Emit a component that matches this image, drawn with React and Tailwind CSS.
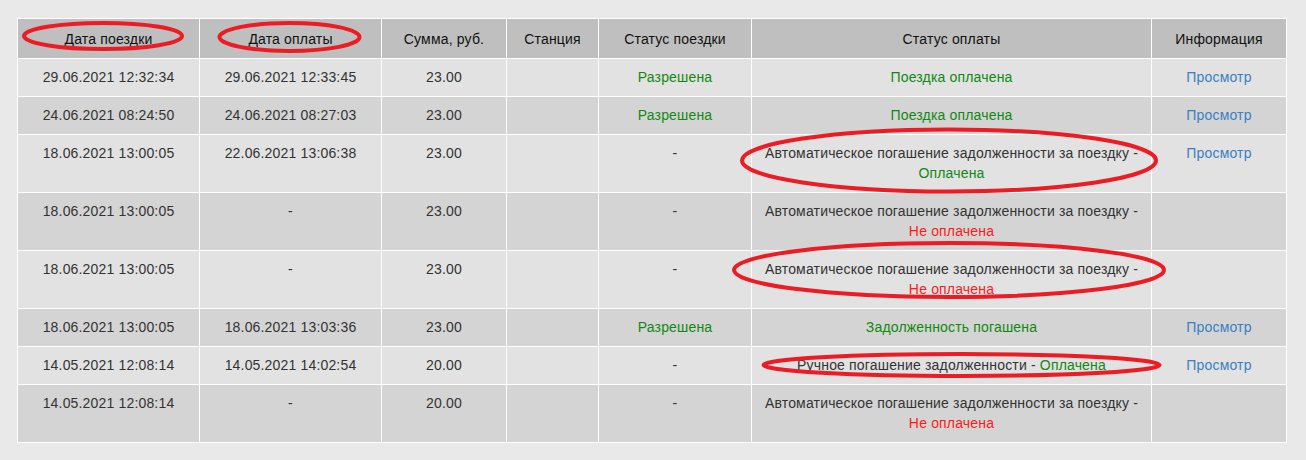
import React from "react";

const rows = [
  { trip: "29.06.2021 12:32:34", paid: "29.06.2021 12:33:45", sum: "23.00", tripStatus: "Разрешена", pay: [{ t: "Поездка оплачена", c: "g" }], info: true },
  { trip: "24.06.2021 08:24:50", paid: "24.06.2021 08:27:03", sum: "23.00", tripStatus: "Разрешена", pay: [{ t: "Поездка оплачена", c: "g" }], info: true },
  { trip: "18.06.2021 13:00:05", paid: "22.06.2021 13:06:38", sum: "23.00", tripStatus: "-", pay: [{ t: "Автоматическое погашение задолженности за поездку - " }, { t: "Оплачена", c: "g" }], info: true },
  { trip: "18.06.2021 13:00:05", paid: "-", sum: "23.00", tripStatus: "-", pay: [{ t: "Автоматическое погашение задолженности за поездку - " }, { t: "Не оплачена", c: "r" }] },
  { trip: "18.06.2021 13:00:05", paid: "-", sum: "23.00", tripStatus: "-", pay: [{ t: "Автоматическое погашение задолженности за поездку - " }, { t: "Не оплачена", c: "r" }] },
  { trip: "18.06.2021 13:00:05", paid: "18.06.2021 13:03:36", sum: "23.00", tripStatus: "Разрешена", pay: [{ t: "Задолженность погашена", c: "g" }], info: true },
  { trip: "14.05.2021 12:08:14", paid: "14.05.2021 14:02:54", sum: "20.00", tripStatus: "-", pay: [{ t: "Ручное погашение задолженности - " }, { t: "Оплачена", c: "g" }], info: true },
  { trip: "14.05.2021 12:08:14", paid: "-", sum: "20.00", tripStatus: "-", pay: [{ t: "Автоматическое погашение задолженности за поездку - " }, { t: "Не оплачена", c: "r" }] },
];

const heads = ["Дата поездки", "Дата оплаты", "Сумма, руб.", "Станция", "Статус поездки", "Статус оплаты", "Информация"];
const widths = [182, 182, 125, 92, 153, 400, 135];

function Part({ p }) {
  if (p.c === "g") return <span className="text-[#118811]">{p.t}</span>;
  if (p.c === "r") return <span className="text-[#ff1a1a]">{p.t}</span>;
  return <span>{p.t}</span>;
}

export default function App() {
  return (
    <div className="min-h-[460px] bg-[#e9e9e9] pt-[18px] pl-[17px] font-['Liberation_Sans',Arial,sans-serif] text-[14px] leading-[20px] tracking-[0.17px] text-[#333]">
      <div className="relative w-[1269px]">
        <table className="w-[1269px] table-fixed border-collapse">
          <colgroup>
            {widths.map((w, i) => (
              <col key={i} style={{ width: w }} />
            ))}
          </colgroup>
          <thead>
            <tr className="bg-[#bfbfbf]">
              {heads.map((h) => (
                <th key={h} className="border border-white pt-[10px] pb-[9px] text-center font-normal text-[#111]">
                  {h}
                </th>
              ))}
            </tr>
          </thead>
          <tbody>
            {rows.map((r, i) => (
              <tr key={i} className={i % 2 === 0 ? "bg-[#e2e2e2]" : "bg-[#d4d4d4]"}>
                <td className="border border-white pt-[8px] pb-[9px] px-2 text-center align-top">{r.trip}</td>
                <td className="border border-white pt-[8px] pb-[9px] px-2 text-center align-top">{r.paid}</td>
                <td className="border border-white pt-[8px] pb-[9px] px-2 text-center align-top">{r.sum}</td>
                <td className="border border-white pt-[8px] pb-[9px] px-2 text-center align-top"></td>
                <td className="border border-white pt-[8px] pb-[9px] px-2 text-center align-top">
                  {r.tripStatus === "-" ? "-" : <span className="text-[#118811]">{r.tripStatus}</span>}
                </td>
                <td className="border border-white pt-[8px] pb-[9px] px-2 text-center align-top">
                  {r.pay.map((p, j) => (
                    <Part key={j} p={p} />
                  ))}
                </td>
                <td className="border border-white pt-[8px] pb-[9px] px-2 text-center align-top">
                  {r.info && <a className="text-[#3a7fc4] cursor-pointer">Просмотр</a>}
                </td>
              </tr>
            ))}
          </tbody>
        </table>
        <svg className="pointer-events-none absolute -left-[17px] -top-[18px]" width="1306" height="460" viewBox="0 0 1306 460">
          <g fill="none" stroke="#ed1c24" strokeWidth="4">
            <ellipse cx="103" cy="36" rx="79" ry="13" />
            <ellipse cx="289.5" cy="37" rx="70" ry="14" />
            <ellipse cx="949" cy="160.5" rx="207" ry="31" />
            <ellipse cx="949" cy="270" rx="215" ry="27" />
            <ellipse cx="961.5" cy="365" rx="198" ry="11" />
          </g>
        </svg>
      </div>
    </div>
  );
}
